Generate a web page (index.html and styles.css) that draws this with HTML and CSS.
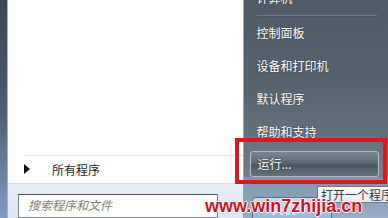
FILE: index.html
```html
<!DOCTYPE html>
<html lang="zh">
<head>
<meta charset="utf-8">
<link rel="stylesheet" href="styles.css">
</head>
<body>
<div class="menu">
  <div class="strip"></div>
  <div class="left">
    <div class="programs"></div>
    <div class="all">
      <span class="arrow"></span>
      <span class="all-label">所有程序</span>
    </div>
    <div class="search-band">
      <div class="search">搜索程序和文件</div>
    </div>
  </div>
  <div class="right">
    <div class="list">
      <div class="item">计算机</div>
      <div class="sep"></div>
      <div class="item">控制面板</div>
      <div class="item">设备和打印机</div>
      <div class="item">默认程序</div>
      <div class="item">帮助和支持</div>
      <div class="run">运行...</div>
    </div>
    <div class="bottom">
      <div class="shutdown"><span>关机</span></div>
    </div>
  </div>
</div>
<div class="highlight"></div>
<div class="tooltip">打开一个程序</div>
<div class="watermark">www.win7zhijia.cn</div>
</body>
</html>
```
FILE: styles.css
```css
html, body {
  margin: 0;
  padding: 0;
}
body {
  width: 388px;
  height: 218px;
  overflow: hidden;
  position: relative;
  font-family: "Noto Sans CJK SC", "Noto Sans", sans-serif;
  font-size: 12px;
}
.menu {
  display: flex;
  height: 218px;
}
.strip {
  width: 7px;
  background: linear-gradient(180deg, #394555 0%, #4b5d74 50%, #7d9cc4 100%);
  border-right: 1px solid #a8b0ba;
}
.left {
  width: 236px;
  display: flex;
  flex-direction: column;
  background: #ffffff;
}
.programs {
  height: 159px;
  border-bottom: 1px solid #dfe3e8;
  margin-left: 16px;
}
.all {
  height: 28px;
  display: flex;
  align-items: center;
  padding-left: 16px;
}
.arrow {
  width: 0;
  height: 0;
  border-top: 5px solid transparent;
  border-bottom: 5px solid transparent;
  border-left: 6px solid #111;
}
.all-label {
  margin-left: 22px;
  color: #1e1e1e;
}
.search-band {
  flex: 1;
  background: linear-gradient(180deg, #e8eef7, #dde6f1);
  border-top: 1px solid #d6dfea;
  padding: 10px 0 0 10px;
}
.search {
  width: 200px;
  height: 24px;
  box-sizing: border-box;
  background: #fff;
  border: 1px solid #7b8088;
  border-top-color: #50555c;
  padding-left: 9px;
  font-style: italic;
  color: #7d7d7d;
  line-height: 19px;
}
.right {
  width: 144px;
  display: flex;
  flex-direction: column;
  border-left: 1px solid #9aa4ad;
  background: linear-gradient(180deg, #4f5c67 0%, #56646f 40%, #6b7a86 75%, #7f93a7 100%);
  color: #fff;
  overflow: hidden;
}
.list {
  margin-top: -19px;
}
.item {
  height: 33px;
  line-height: 33px;
  padding-left: 12px;
  text-shadow: 0 0 2px rgba(0,0,0,.5);
}
.sep {
  height: 1px;
  margin: 1px 11px 1px 13px;
  background: #6f7c86;
  border-bottom: 1px solid #4a5660;
}
.item:nth-child(3) {
  margin-top: -2px;
}
.run {
  margin: 3px 9px 0 6px;
  height: 26px;
  box-sizing: border-box;
  border: 1px solid #b4bcc4;
  border-radius: 3px;
  background: linear-gradient(180deg, #7a8793 0%, #5d6a75 45%, #4a5560 55%, #66737e 100%);
  padding-left: 6px;
  line-height: 24px;
  text-shadow: 0 0 2px rgba(0,0,0,.6);
}
.bottom {
  flex: 1;
  position: relative;
  background: linear-gradient(180deg, #7f94aa, #96aec6);
}
.shutdown {
  position: absolute;
  left: 8px;
  top: 20px;
  width: 80px;
  height: 26px;
  border: 1px solid #5b7087;
  border-radius: 3px;
  background: linear-gradient(180deg, #c6dcef, #8fb2d3);
  padding-left: 18px;
  box-sizing: border-box;
  line-height: 22px;
}
.highlight {
  position: absolute;
  left: 235px;
  top: 138px;
  width: 152px;
  height: 46px;
  box-sizing: border-box;
  border: 4px solid #dc1820;
}
.tooltip {
  position: absolute;
  left: 317px;
  top: 186px;
  height: 17px;
  width: 90px;
  box-sizing: border-box;
  border: 1px solid #767676;
  background: linear-gradient(180deg, #ffffff, #e6e8f0);
  padding-left: 3px;
  line-height: 15px;
  color: #3a3a3a;
  white-space: nowrap;
}
.watermark {
  position: absolute;
  left: 205px;
  top: 197px;
  font-family: "Liberation Sans", Arial, sans-serif;
  font-weight: bold;
  font-size: 18px;
  line-height: 1;
  color: #d4101c;
  text-shadow: 1px 0 0 #fff, -1px 0 0 #fff, 0 1px 0 #fff, 0 -1px 0 #fff;
  white-space: nowrap;
}
```
